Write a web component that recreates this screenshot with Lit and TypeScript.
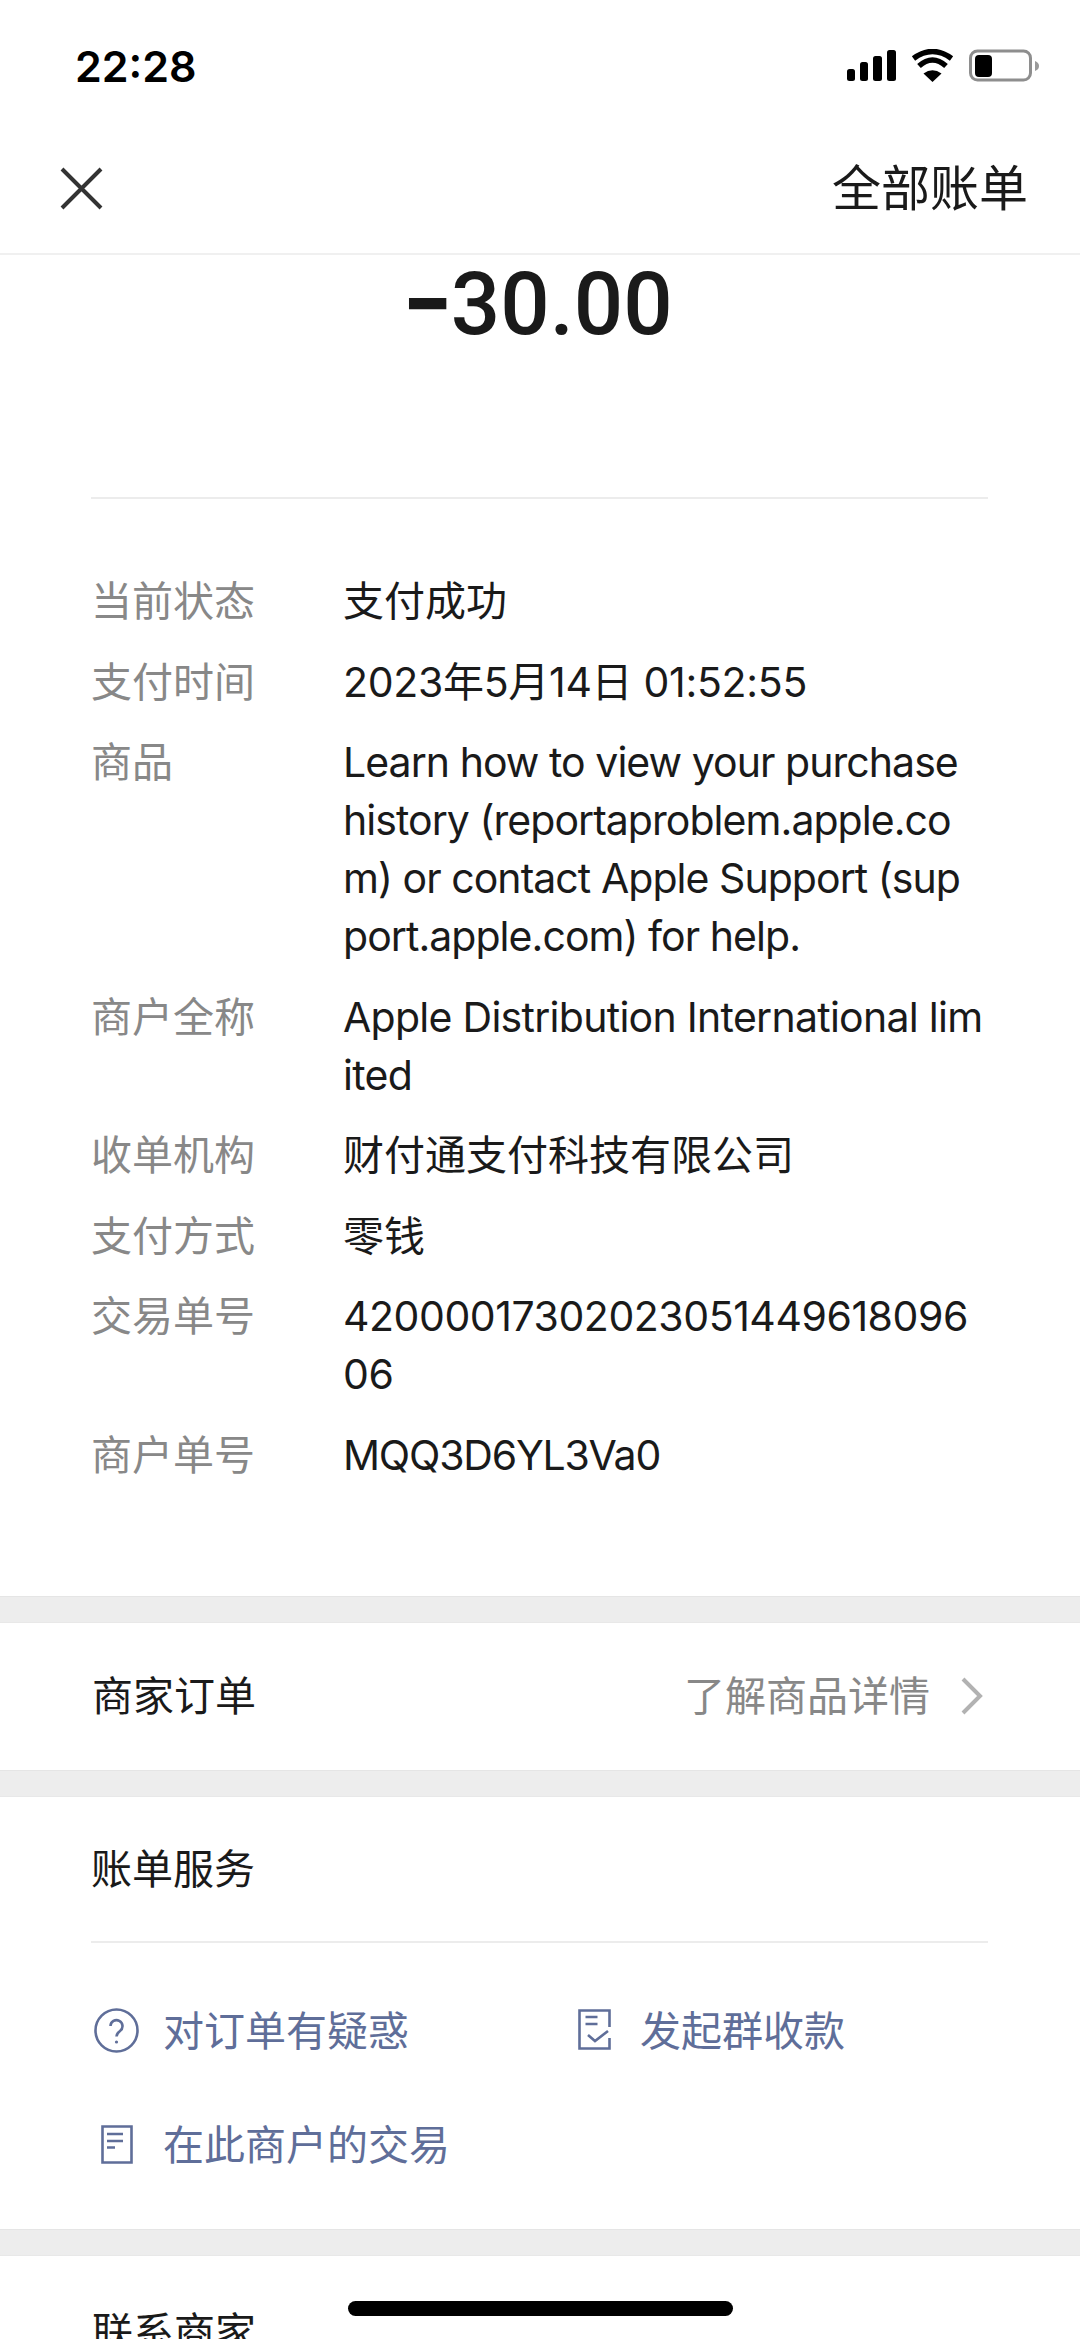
import { LitElement, css, html, svg } from 'lit'
import { customElement } from 'lit/decorators.js'

const rows = [
  ['当前状态', '支付成功', ''],
  ['支付时间', '2023年5月14日 01:52:55', 'mixed'],
  ['商品', 'Learn how to view your purchase\nhistory (reportaproblem.apple.co\nm) or contact Apple Support (sup\nport.apple.com) for help.', 'latin'],
  ['商户全称', 'Apple Distribution International lim\nited', 'name'],
  ['收单机构', '财付通支付科技有限公司', ''],
  ['支付方式', '零钱', ''],
  ['交易单号', '42000017302023051449618096\n06', 'digits'],
  ['商户单号', 'MQQ3D6YL3Va0', 'code'],
]

const questionIcon = svg`
  <circle cx="22.5" cy="22.5" r="21"></circle>
  <path d="M16.5 18a6 6 0 1 1 9.5 5c-2 1.5-3.5 2.5-3.5 5.5"></path>
  <circle class="dot" cx="22.5" cy="34" r="1.6"></circle>`

const checkIcon = svg`
  <path d="M38.5 19V2.5H8.5V40.5H38.5V30"></path>
  <path d="M14.5 9H26.5M14.5 16H26.5"></path>
  <path d="M17 27l7 6 13-10"></path>`

const docIcon = svg`
  <path d="M8.5 4.5H37.5V40.5H8.5Z"></path>
  <path d="M13 12H29M13 19H29M13 25.5H21"></path>`

@customElement('app-root')
export class AppRoot extends LitElement {
  static styles = css`
    :host {
      display: block;
      position: relative;
      height: 2339px;
      overflow: hidden;
      background: #fff;
      color: #1a1a1a;
      font-family: Inter, 'Noto Sans CJK SC', sans-serif;
      font-size: 41px;
      line-height: 58px;
    }

    .status {
      display: flex;
      justify-content: space-between;
      align-items: flex-start;
      height: 49px;
      padding: 49px 41px 0 75px;
    }
    .time {
      font-family: Inter, sans-serif;
      font-weight: 600;
      font-size: 43px;
      line-height: 34px;
      color: #000;
    }
    .status-icons {
      display: flex;
      gap: 15px;
    }

    .nav {
      display: flex;
      justify-content: space-between;
      align-items: center;
      box-sizing: border-box;
      height: 157px;
      padding: 26px 52px 0 59px;
      border-bottom: 2px solid #f0f0f0;
    }
    .nav-title {
      font-size: 49px;
    }

    .amount {
      height: 242px;
      padding: 1px 4px 0 0;
      box-sizing: border-box;
      text-align: center;
      font-family: Roboto, sans-serif;
      font-weight: 500;
      font-size: 87px;
      line-height: 96px;
    }
    .minus {
      font-weight: 900;
    }

    .details {
      margin: 0 92px 0 91px;
      padding: 73px 0 112px;
      border-top: 2px solid #ececec;
      display: flex;
      flex-direction: column;
      gap: 22.5px;
    }
    .row {
      display: grid;
      grid-template-columns: 252px 1fr;
    }
    .label {
      color: #888;
    }
    .value {
      white-space: pre-line;
    }
    .value.latin {
      letter-spacing: -0.95px;
    }
    .value.name {
      letter-spacing: -0.72px;
    }
    .value.code {
      letter-spacing: -1.2px;
    }
    .value.digits {
      letter-spacing: -0.45px;
    }
    .value.mixed {
      letter-spacing: -0.3px;
    }

    .band {
      height: 25px;
      background: #ededed;
      border-top: 1px solid #e5e5e5;
      border-bottom: 1px solid #e8e8e8;
    }

    .order {
      display: flex;
      justify-content: space-between;
      align-items: center;
      height: 147px;
      padding: 0 97px 0 92px;
    }
    .order-link {
      display: flex;
      align-items: center;
      gap: 31px;
      color: #888;
    }

    .service-title {
      margin: 0 92px 0 91px;
      height: 144px;
      display: flex;
      align-items: center;
      border-bottom: 2px solid #ececec;
    }
    .actions {
      display: grid;
      grid-template-columns: 477px 1fr;
      row-gap: 56px;
      padding: 59px 0 55.5px 94px;
      color: #5f6e99;
    }
    .action {
      display: flex;
      align-items: center;
      gap: 24px;
    }
    .action svg {
      width: 45px;
      height: 45px;
      fill: none;
      stroke: #5f6e99;
      stroke-width: 2.6;
    }
    .action .dot {
      fill: #5f6e99;
      stroke: none;
    }

    .contact {
      padding: 47px 0 0 92px;
    }

    .home-bar {
      position: absolute;
      left: 348px;
      top: 2301px;
      width: 385px;
      height: 15px;
      border-radius: 8px;
      background: #000;
    }
  `

  render() {
    return html`
      <div class="status">
        <span class="time">22:28</span>
        <div class="status-icons">
          <svg width="49" height="33" viewBox="0 0 49 33">
            <rect x="0" y="20" width="8" height="12" rx="2.5"></rect>
            <rect x="13" y="13" width="8" height="19" rx="2.5"></rect>
            <rect x="26" y="7" width="9" height="25" rx="2.5"></rect>
            <rect x="40" y="1" width="9" height="31" rx="2.5"></rect>
          </svg>
          <svg width="43" height="33" viewBox="0 0 43 33">
            <path d="M2.5 9.5Q21.5-4.5 40.5 9.5M8 17Q21.5 5 35 17" fill="none" stroke="#000" stroke-width="5.5"></path>
            <path d="M21.5 33L12.5 24.5Q21.5 18 30.5 24.5Z"></path>
          </svg>
          <svg width="70" height="33" viewBox="0 0 70 33">
            <rect x="1.5" y="2" width="60" height="29" rx="7" fill="none" stroke="#8e8e8e" stroke-width="3"></rect>
            <rect x="6" y="6" width="17" height="22" rx="4"></rect>
            <path d="M66 12c3 1 4 3 4 5s-1 4-4 5Z" fill="#9a9a9a"></path>
          </svg>
        </div>
      </div>

      <div class="nav">
        <svg width="44" height="44" viewBox="0 0 44 44" fill="none" stroke="#333" stroke-width="4">
          <path d="M3 2L42 41M42 2L3 41"></path>
        </svg>
        <span class="nav-title">全部账单</span>
      </div>

      <div class="amount"><span class="minus">−</span>30.00</div>

      <div class="details">
        ${rows.map(
          ([label, value, kind]) => html`
            <div class="row">
              <span class="label">${label}</span>
              <span class="value ${kind}">${value}</span>
            </div>
          `
        )}
      </div>

      <div class="band"></div>

      <div class="order">
        <span>商家订单</span>
        <span class="order-link">
          了解商品详情
          <svg width="22" height="38" viewBox="0 0 22 38" fill="none" stroke="#b2b2b2" stroke-width="4">
            <path d="M2 2L19 19L2 36"></path>
          </svg>
        </span>
      </div>

      <div class="band"></div>

      <div class="service-title">账单服务</div>
      <div class="actions">
        <div class="action"><svg viewBox="0 0 45 45">${questionIcon}</svg>对订单有疑惑</div>
        <div class="action"><svg viewBox="0 0 45 45">${checkIcon}</svg>发起群收款</div>
        <div class="action"><svg viewBox="0 0 45 45">${docIcon}</svg>在此商户的交易</div>
      </div>

      <div class="band"></div>

      <div class="contact">联系商家</div>

      <div class="home-bar"></div>
    `
  }
}
